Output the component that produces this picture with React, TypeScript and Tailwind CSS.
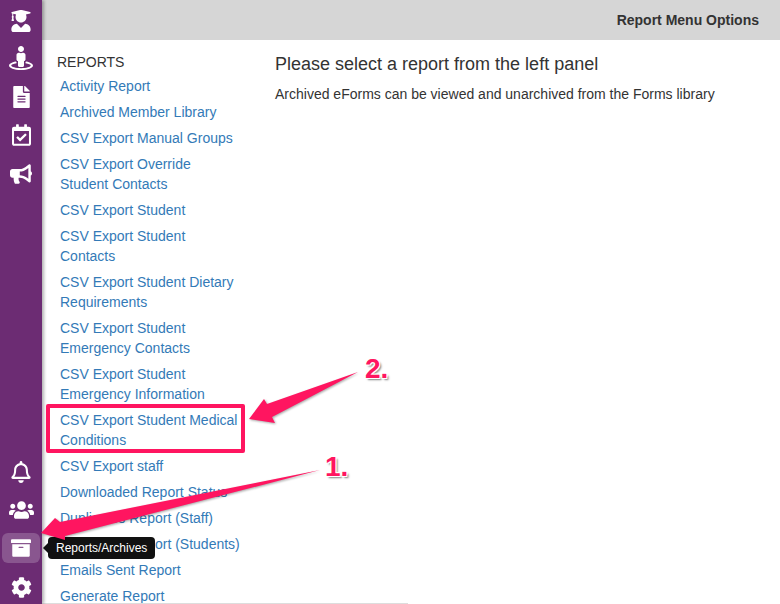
import {
  FaArchive,
  FaBullhorn,
  FaCog,
  FaFileAlt,
  FaRegBell,
  FaRegCalendarCheck,
  FaStreetView,
  FaUserGraduate,
  FaUsers,
} from "react-icons/fa"

const reports = [
  ["Activity Report"],
  ["Archived Member Library"],
  ["CSV Export Manual Groups"],
  ["CSV Export Override", "Student Contacts"],
  ["CSV Export Student"],
  ["CSV Export Student", "Contacts"],
  ["CSV Export Student Dietary", "Requirements"],
  ["CSV Export Student", "Emergency Contacts"],
  ["CSV Export Student", "Emergency Information"],
  ["CSV Export Student Medical", "Conditions"],
  ["CSV Export staff"],
  ["Downloaded Report Status"],
  ["Duplicates Report (Staff)"],
  ["Duplicates Report (Students)"],
  ["Emails Sent Report"],
  ["Generate Report"],
]

function Sidebar() {
  return (
    <aside className="relative z-10 flex h-[604px] w-[42px] shrink-0 flex-col items-center justify-between bg-[#6c2c73] pb-[6px] pt-[10px] text-white shadow-[2px_0_3px_rgba(0,0,0,0.3)]">
      <div className="flex flex-col items-center">
        <FaUserGraduate className="mb-[14px] h-[22px] w-[20px]" />
        <FaStreetView className="mb-[16px] h-[24px] w-[26px]" />
        <FaFileAlt className="mb-[16px] h-[22px] w-[17px]" />
        <FaRegCalendarCheck className="mb-[18px] h-[22px] w-[19px]" />
        <FaBullhorn className="h-[20px] w-[22px]" />
      </div>
      <div className="flex flex-col items-center">
        <FaRegBell className="mb-[17px] h-[22px] w-[20px]" />
        <FaUsers className="mb-[13px] h-[20px] w-[27px]" />
        <div className="mb-[14px] flex h-[30px] w-[38px] items-center justify-center rounded-[6px] bg-white/20">
          <FaArchive className="h-[20px] w-[22px]" />
        </div>
        <FaCog className="h-[21px] w-[21px]" />
      </div>
    </aside>
  )
}

export default function App() {
  return (
    <div className="relative flex h-[604px] w-[780px] overflow-hidden bg-white font-['Liberation_Sans',Arial,sans-serif] text-[14px] leading-[20px] text-[#333]">
      <Sidebar />
      <div className="flex min-w-0 flex-1 flex-col">
        <header className="flex h-[40px] shrink-0 items-center justify-end bg-[#d6d6d6] pr-[21px] font-bold">
          Report Menu Options
        </header>
        <div className="flex min-h-0 flex-1 overflow-hidden">
          <nav className="w-[233px] shrink-0 pl-[15px] pt-[12px]">
            <div className="mb-[4px]">REPORTS</div>
            <ul className="flex flex-col gap-[6px] pl-[3px]">
              {reports.map((lines) => (
                <li key={lines[0] + lines.length} className="text-[#337ab7]">
                  {lines.map((line) => (
                    <div key={line}>{line}</div>
                  ))}
                </li>
              ))}
            </ul>
          </nav>
          <main className="pt-[12px]">
            <h1 className="mb-[8px] text-[18px] leading-[24px]">Please select a report from the left panel</h1>
            <p>Archived eForms can be viewed and unarchived from the Forms library</p>
          </main>
        </div>
        <div className="h-px w-[366px] shrink-0 bg-[#ddd]" />
      </div>

      {/* Tooltip */}
      <div className="absolute left-[48px] top-[537px] z-20 flex h-[22px] items-center rounded-[4px] bg-[#111] px-[8px] text-[12px] text-white">
        <span className="absolute left-[-5px] top-[6px] h-0 w-0 border-y-[5px] border-r-[5px] border-y-transparent border-r-[#111]" />
        Reports/Archives
      </div>

      {/* Annotations */}
      <div className="absolute left-[46px] top-[404px] z-20 h-[49px] w-[199px] rounded-[2px] border-[4px] border-[#ff1560]" />
      <svg className="absolute left-0 top-0 z-20 h-[604px] w-[780px] drop-shadow-[1px_1px_1px_rgba(0,0,0,0.35)]" viewBox="0 0 780 604">
        <polygon points="358,372 267,404 264,399 249,419 275,423 272,417" fill="#ff1560" />
        <polygon points="320,470 60,522 55,518 41,533 65,540 65,536" fill="#ff1560" />
      </svg>
      <span className="absolute left-[365px] top-[353px] z-20 text-[28px] font-bold leading-[32px] text-[#ff1560] [text-shadow:1px_1px_0_#fff,-1px_-1px_0_#fff,1px_-1px_0_#fff,-1px_1px_0_#fff,2px_2px_2px_rgba(0,0,0,0.5)]">
        2.
      </span>
      <span className="absolute left-[325px] top-[451px] z-20 text-[28px] font-bold leading-[32px] text-[#ff1560] [text-shadow:1px_1px_0_#fff,-1px_-1px_0_#fff,1px_-1px_0_#fff,-1px_1px_0_#fff,2px_2px_2px_rgba(0,0,0,0.5)]">
        1.
      </span>
    </div>
  )
}
